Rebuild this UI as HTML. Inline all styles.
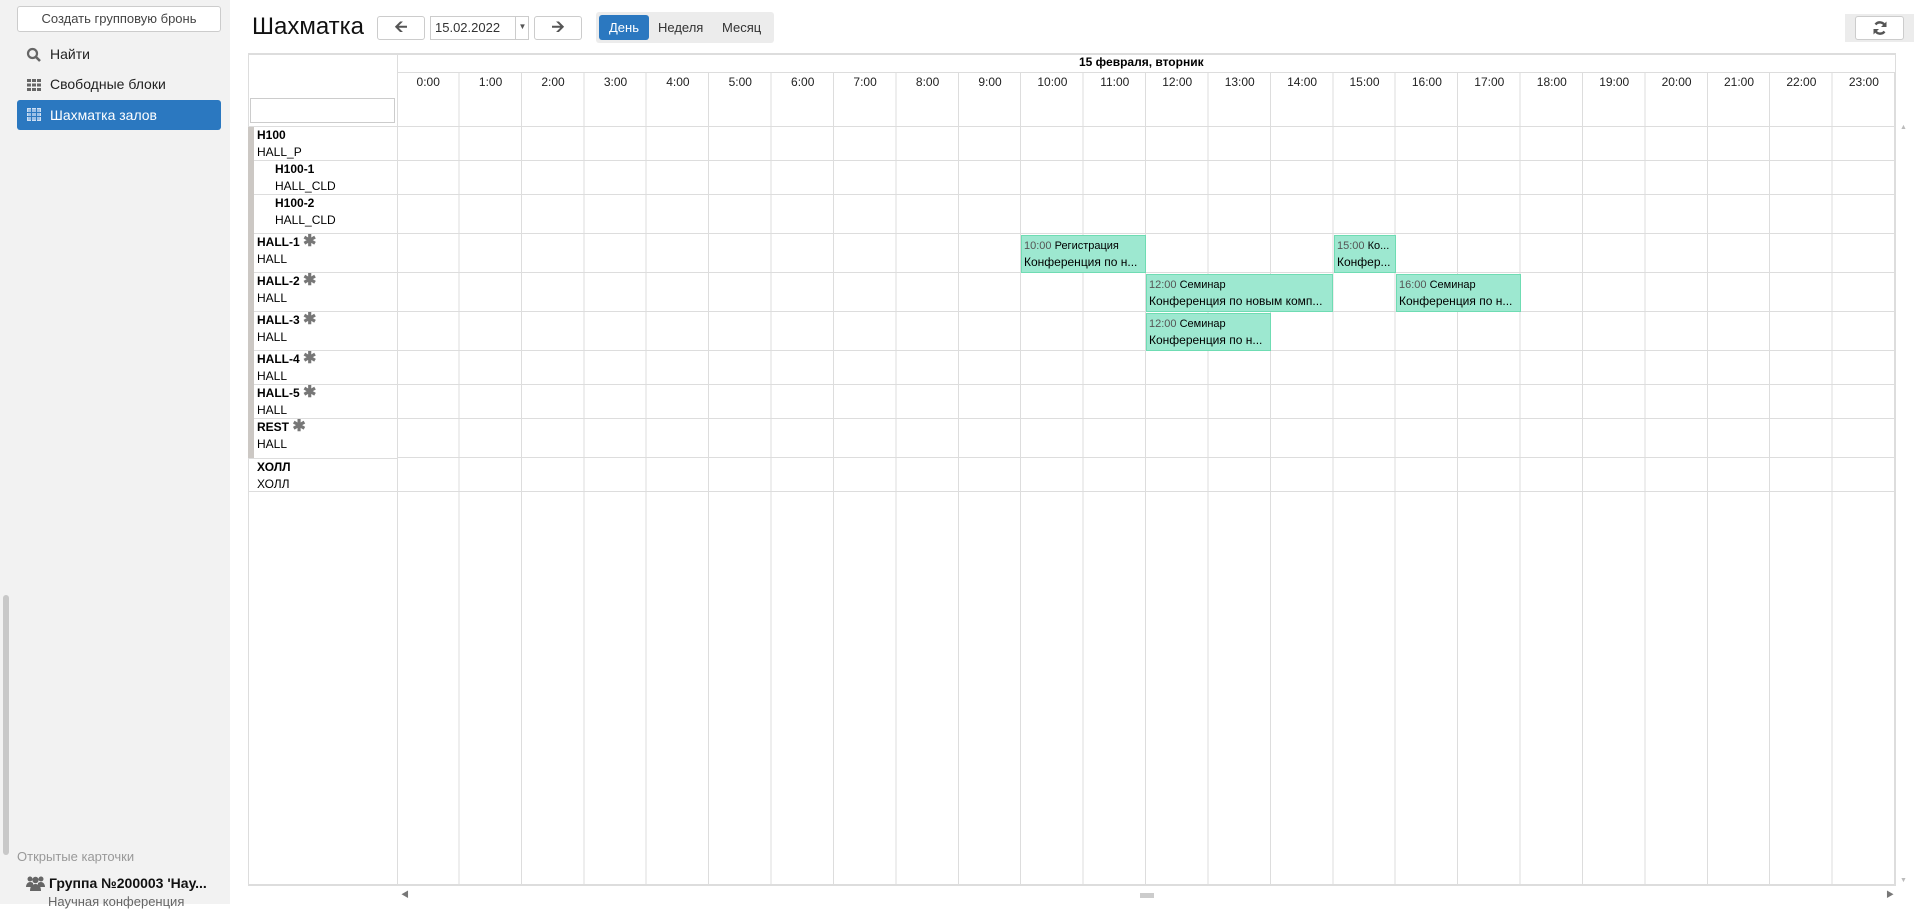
<!DOCTYPE html>
<html><head><meta charset="utf-8"><style>
*{box-sizing:border-box;margin:0;padding:0}
body{width:1914px;height:904px;overflow:hidden;background:#fff;font-family:"Liberation Sans","Noto Sans CJK SC",sans-serif;color:#000;position:relative}
.abs{position:absolute}
#side{left:0;top:0;width:230px;height:904px;background:#f2f2f2}
.btn{background:#fff;border:1px solid #ccc;border-radius:3px}
.nav{left:17px;width:204px;height:30px;font-size:14px;line-height:30px;padding-left:33px;color:#222}
.hr{font-size:12px;color:#222;text-align:center;width:62.42px;top:75px}
.rl{left:257px;font-size:12px;line-height:17px}
.rl b{display:block;font-weight:bold}
.ev{background:#9de8d0;border:1px solid #6fdcb3;font-size:11px;line-height:16px;padding:2px 2px;overflow:hidden;white-space:nowrap}
.ev .t{color:#555}
.ev .n{font-size:12px;display:block;overflow:hidden;text-overflow:ellipsis}
.star{color:#777;font-size:16px;font-weight:bold;line-height:12px}
</style></head><body>
<div id="side" class="abs"></div>
<div class="abs" style="left:3px;top:595px;width:6px;height:260px;background:#c8c8c8;border-radius:3px"></div>
<div class="abs btn" style="left:17px;top:6px;width:204px;height:26px;font-size:13px;line-height:24px;text-align:center;color:#444">Создать групповую бронь</div>
<div class="abs nav" style="top:39px">Найти</div>
<svg class="abs" style="left:26px;top:47px" width="16" height="16" viewBox="0 0 16 16"><circle cx="6.5" cy="6.5" r="4.5" fill="none" stroke="#666" stroke-width="2.2"/><line x1="10" y1="10" x2="14" y2="14" stroke="#666" stroke-width="2.6"/></svg>
<div class="abs nav" style="top:69px">Свободные блоки</div>
<svg class="abs" style="left:27px;top:79px" width="14" height="12"><g fill="#666"><rect x="0" y="0" width="4" height="3"/><rect x="5" y="0" width="4" height="3"/><rect x="10" y="0" width="4" height="3"/><rect x="0" y="4.5" width="4" height="3"/><rect x="5" y="4.5" width="4" height="3"/><rect x="10" y="4.5" width="4" height="3"/><rect x="0" y="9" width="4" height="3"/><rect x="5" y="9" width="4" height="3"/><rect x="10" y="9" width="4" height="3"/></g></svg>
<div class="abs nav" style="top:100px;background:#2b78c0;border-radius:3px;color:#fff">Шахматка залов</div>
<svg class="abs" style="left:27px;top:108px" width="14" height="13"><rect x="0.5" y="0.5" width="13" height="12" fill="#9cc0e6" stroke="#cfe0f3"/><g stroke="#2b78c0" stroke-width="1"><line x1="0" y1="4.5" x2="14" y2="4.5"/><line x1="0" y1="8.5" x2="14" y2="8.5"/><line x1="4.5" y1="0" x2="4.5" y2="13"/><line x1="9.5" y1="0" x2="9.5" y2="13"/></g></svg>
<div class="abs" style="left:17px;top:849px;font-size:13px;color:#999">Открытые карточки</div>
<svg class="abs" style="left:26px;top:875px" width="19" height="16" viewBox="0 0 19 16"><g fill="#666"><circle cx="4" cy="4" r="2.5"/><circle cx="15" cy="4" r="2.5"/><circle cx="9.5" cy="5" r="3.2"/><path d="M0 12c0-3 2-5 4-5s3 1 3 1v4z"/><path d="M19 12c0-3-2-5-4-5s-3 1-3 1v4z"/><path d="M4 16c0-5 2.5-7 5.5-7s5.5 2 5.5 7z"/></g></svg>
<div class="abs" style="left:49px;top:875px;font-size:14px;font-weight:bold;color:#111">Группа №200003 'Нау...</div>
<div class="abs" style="left:48px;top:894px;font-size:13px;color:#666">Научная конференция</div>

<div class="abs" style="left:252px;top:13px;font-size:24px;color:#111">Шахматка</div>
<div class="abs btn" style="left:377px;top:16px;width:48px;height:24px;text-align:center;line-height:22px;font-size:16px;color:#555;font-weight:bold">&#129128;</div>
<div class="abs" style="left:430px;top:16px;width:99px;height:24px;border:1px solid #ccc;font-size:13px;line-height:22px;padding-left:4px;color:#333">15.02.2022</div>
<div class="abs" style="left:515px;top:16px;width:14px;height:24px;border-left:1px solid #ccc;font-size:8px;line-height:22px;text-align:center;color:#555">&#9660;</div>
<div class="abs btn" style="left:534px;top:16px;width:48px;height:24px;text-align:center;line-height:22px;font-size:16px;color:#555;font-weight:bold">&#129130;</div>
<div class="abs" style="left:596px;top:12px;width:178px;height:31px;background:#ececec;border-radius:3px"></div>
<div class="abs" style="left:599px;top:15px;width:50px;height:25px;background:#2b78c0;border-radius:3px;color:#fff;font-size:13px;line-height:25px;text-align:center">День</div>
<div class="abs" style="left:658px;top:15px;font-size:13px;line-height:25px;color:#333">Неделя</div>
<div class="abs" style="left:722px;top:15px;font-size:13px;line-height:25px;color:#333">Месяц</div>
<div class="abs" style="left:1845px;top:14px;width:69px;height:28px;background:#ececec"></div>
<div class="abs btn" style="left:1855px;top:16px;width:49px;height:24px"></div>
<svg class="abs" style="left:1872px;top:20px" width="16" height="16" viewBox="0 0 16 16"><path d="M13 6A5.5 5.5 0 0 0 3.5 4.5" fill="none" stroke="#555" stroke-width="2.4"/><path d="M3 10A5.5 5.5 0 0 0 12.5 11.5" fill="none" stroke="#555" stroke-width="2.4"/><path d="M14.5 1.5V7H9z" fill="#555"/><path d="M1.5 14.5V9H7z" fill="#555"/></svg>

<div class="abs" style="left:248px;top:53px;width:1648px;height:833px;border:1px solid #ddd;border-top:2px solid #ddd;border-bottom:2px solid #ddd"></div>
<div class="abs" style="left:397px;top:53px;width:1px;height:833px;border-left:1px solid #ddd"></div>
<div class="abs" style="left:397px;top:72px;width:1498px;height:814px;background:repeating-linear-gradient(90deg,transparent 0,transparent 61.42px,#ddd 61.42px,#ddd 62.42px)"></div>
<div class="abs" style="left:397px;top:72px;width:1498px;border-top:1px solid #ddd"></div>
<div class="abs" style="left:1079px;top:55px;font-size:12px;font-weight:bold">15 февраля, вторник</div>
<div class="abs" style="left:250px;top:98px;width:145px;height:25px;border:1px solid #ccc"></div>
<div class="abs" style="left:248px;top:126px;width:1648px;height:366px;background:linear-gradient(#ddd,#ddd) 0 0/100% 1px no-repeat,linear-gradient(#ddd,#ddd) 0 34px/100% 1px no-repeat,linear-gradient(#ddd,#ddd) 0 68px/100% 1px no-repeat,linear-gradient(#ddd,#ddd) 0 107px/100% 1px no-repeat,linear-gradient(#ddd,#ddd) 0 146px/100% 1px no-repeat,linear-gradient(#ddd,#ddd) 0 185px/100% 1px no-repeat,linear-gradient(#ddd,#ddd) 0 224px/100% 1px no-repeat,linear-gradient(#ddd,#ddd) 0 258px/100% 1px no-repeat,linear-gradient(#ddd,#ddd) 0 292px/100% 1px no-repeat,linear-gradient(#ddd,#ddd) 0 331px/100% 1px no-repeat,linear-gradient(#ddd,#ddd) 0 365px/100% 1px no-repeat"></div>
<div class="abs" style="left:248px;top:127px;width:6px;height:331px;background:#ccc8c4"></div>
<div class="abs" style="left:254px;top:127px;width:143px;height:331px;background:#fff"></div>
<div class="abs" style="left:254px;top:459px;width:143px;height:33px;background:#fff"></div>
<div class="abs" style="left:254px;top:160px;width:143px;height:1px;background:#ddd"></div>
<div class="abs" style="left:254px;top:194px;width:143px;height:1px;background:#ddd"></div>
<div class="abs" style="left:254px;top:233px;width:143px;height:1px;background:#ddd"></div>
<div class="abs" style="left:254px;top:272px;width:143px;height:1px;background:#ddd"></div>
<div class="abs" style="left:254px;top:311px;width:143px;height:1px;background:#ddd"></div>
<div class="abs" style="left:254px;top:350px;width:143px;height:1px;background:#ddd"></div>
<div class="abs" style="left:254px;top:384px;width:143px;height:1px;background:#ddd"></div>
<div class="abs" style="left:254px;top:418px;width:143px;height:1px;background:#ddd"></div>
<div class="abs" style="left:248px;top:458px;width:149px;height:1px;background:#ddd"></div>
<div class="abs" style="left:248px;top:491px;width:149px;height:1px;background:#ddd"></div>

<div class="abs rl" style="top:127px"><b>H100</b>HALL_P</div>
<div class="abs rl" style="top:161px;left:275px"><b>H100-1</b>HALL_CLD</div>
<div class="abs rl" style="top:195px;left:275px"><b>H100-2</b>HALL_CLD</div>
<div class="abs rl" style="top:234px"><b>HALL-1 <span class="star">&#10033;</span></b>HALL</div>
<div class="abs rl" style="top:273px"><b>HALL-2 <span class="star">&#10033;</span></b>HALL</div>
<div class="abs rl" style="top:312px"><b>HALL-3 <span class="star">&#10033;</span></b>HALL</div>
<div class="abs rl" style="top:351px"><b>HALL-4 <span class="star">&#10033;</span></b>HALL</div>
<div class="abs rl" style="top:385px"><b>HALL-5 <span class="star">&#10033;</span></b>HALL</div>
<div class="abs rl" style="top:419px"><b>REST <span class="star">&#10033;</span></b>HALL</div>
<div class="abs rl" style="top:459px"><b>ХОЛЛ</b>ХОЛЛ</div>

<div class="abs hr" style="left:397px">0:00</div><div class="abs hr" style="left:459.4px">1:00</div><div class="abs hr" style="left:521.8px">2:00</div><div class="abs hr" style="left:584.3px">3:00</div><div class="abs hr" style="left:646.7px">4:00</div><div class="abs hr" style="left:709.1px">5:00</div><div class="abs hr" style="left:771.5px">6:00</div><div class="abs hr" style="left:833.9px">7:00</div><div class="abs hr" style="left:896.4px">8:00</div><div class="abs hr" style="left:958.8px">9:00</div><div class="abs hr" style="left:1021.2px">10:00</div><div class="abs hr" style="left:1083.6px">11:00</div><div class="abs hr" style="left:1146px">12:00</div><div class="abs hr" style="left:1208.5px">13:00</div><div class="abs hr" style="left:1270.9px">14:00</div><div class="abs hr" style="left:1333.3px">15:00</div><div class="abs hr" style="left:1395.7px">16:00</div><div class="abs hr" style="left:1458.1px">17:00</div><div class="abs hr" style="left:1520.6px">18:00</div><div class="abs hr" style="left:1583px">19:00</div><div class="abs hr" style="left:1645.4px">20:00</div><div class="abs hr" style="left:1707.8px">21:00</div><div class="abs hr" style="left:1770.2px">22:00</div><div class="abs hr" style="left:1832.7px">23:00</div>

<div class="abs ev" style="left:1021px;top:235px;width:125px;height:38px"><span class="t">10:00</span> Регистрация<span class="n">Конференция по н...</span></div>
<div class="abs ev" style="left:1334px;top:235px;width:62px;height:38px"><span class="t">15:00</span> Ко...<span class="n">Конфер...</span></div>
<div class="abs ev" style="left:1146px;top:274px;width:187px;height:38px"><span class="t">12:00</span> Семинар<span class="n">Конференция по новым комп...</span></div>
<div class="abs ev" style="left:1396px;top:274px;width:125px;height:38px"><span class="t">16:00</span> Семинар<span class="n">Конференция по н...</span></div>
<div class="abs ev" style="left:1146px;top:313px;width:125px;height:38px"><span class="t">12:00</span> Семинар<span class="n">Конференция по н...</span></div>

<div class="abs" style="left:1900px;top:124px;font-size:7px;color:#bbb">&#9650;</div>
<div class="abs" style="left:1900px;top:877px;font-size:7px;color:#bbb">&#9660;</div>
<div class="abs" style="left:401px;top:889px;font-size:8px;color:#777">&#9664;</div>
<div class="abs" style="left:1886px;top:889px;font-size:8px;color:#777">&#9654;</div>
<div class="abs" style="left:1140px;top:893px;width:14px;height:5px;background:#ccc"></div>
</body></html>
